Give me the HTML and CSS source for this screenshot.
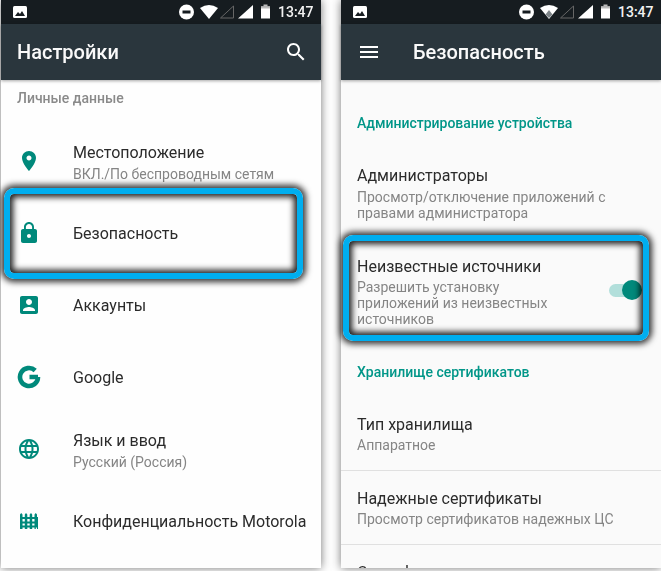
FILE: index.html
```html
<!DOCTYPE html>
<html lang="ru">
<head>
<meta charset="UTF-8">
<title>Настройки</title>
<link rel="stylesheet" href="styles.css">
</head>
<body>

<div class="screens">

  <div class="phone phone-white">
    <div class="status-bar">
      <svg class="pic-icon" width="14" height="12" viewBox="0 0 14 12"><rect width="14" height="12" rx="1.5" fill="#fff"/><path d="M2 10l3-4 2 2 2-3 3 5z" fill="#161c20"/></svg>
      <svg class="status-icons" width="94" height="24" viewBox="0 0 94 24">
        <circle cx="8.5" cy="12" r="7.5" fill="#fff"/><rect x="4.5" y="10.5" width="8" height="3" fill="#161c20"/>
        <path d="M22 8Q31 2 40 8L31 19z" fill="#fff"/>
        <path d="M42.5 18L55.5 6V18z" fill="none" stroke="#666" stroke-width="1"/>
        <path d="M60 18.500L75 5V18.500z" fill="#fff"/>
        <rect x="83" y="6.500" width="9" height="12" fill="#fff"/><rect x="85.500" y="4.500" width="4" height="2" fill="#bbb"/><rect x="83" y="6.500" width="9" height="2" fill="#bbb"/>
      </svg>
      <span class="time">13:47</span>
    </div>
    <div class="toolbar">
      <span class="toolbar-title">Настройки</span>
      <svg class="search-icon" width="24" height="24" viewBox="0 0 24 24"><path fill="#fff" d="M15.500 14h-.79l-.28-.27C15.410 12.590 16 11.110 16 9.500 16 5.910 13.090 3 9.500 3S3 5.910 3 9.500 5.910 16 9.500 16c1.610 0 3.090-.59 4.230-1.570l.27.28v.79l5 4.990L20.490 19l-4.990-5zm-6 0C7.010 14 5 11.990 5 9.500S7.010 5 9.500 5 14 7.010 14 9.500 11.990 14 9.500 14z"/></svg>
    </div>
    <div class="section-gray">Личные данные</div>

    <div class="menu-row">
      <svg class="row-icon" width="24" height="24" viewBox="0 0 24 24"><path d="M12 2C8.130 2 5 5.130 5 9c0 5.250 7 13 7 13s7-7.750 7-13c0-3.870-3.130-7-7-7zm0 9.500c-1.380 0-2.500-1.120-2.500-2.500s1.120-2.500 2.500-2.500 2.500 1.120 2.500 2.500-1.120 2.500-2.500 2.500z"/></svg>
      <div>
        <div class="title">Местоположение</div>
        <div class="sub">ВКЛ./По беспроводным сетям</div>
      </div>
    </div>
    <div class="menu-row">
      <svg class="row-icon" width="24" height="24" viewBox="0 0 24 24"><path d="M18 8h-1V6c0-2.760-2.240-5-5-5S7 3.240 7 6v2H6c-1.100 0-2 .9-2 2v10c0 1.100.9 2 2 2h12c1.100 0 2-.9 2-2V10c0-1.100-.9-2-2-2zm-6 9c-1.100 0-2-.9-2-2s.9-2 2-2 2 .9 2 2-.9 2-2 2zm3.100-9H8.900V6c0-1.710 1.390-3.100 3.100-3.100 1.710 0 3.100 1.390 3.100 3.100v2z"/></svg>
      <div class="title">Безопасность</div>
    </div>
    <div class="menu-row">
      <svg class="row-icon" width="24" height="24" viewBox="0 0 24 24"><path d="M3 5v14c0 1.100.89 2 2 2h14c1.100 0 2-.9 2-2V5c0-1.100-.9-2-2-2H5c-1.110 0-2 .9-2 2zm12 4c0 1.660-1.340 3-3 3s-3-1.340-3-3 1.340-3 3-3 3 1.340 3 3zm-9 8c0-2 4-3.100 6-3.100s6 1.100 6 3.100v1H6v-1z"/></svg>
      <div class="title">Аккаунты</div>
    </div>
    <div class="menu-row">
      <svg class="row-icon" width="24" height="24" viewBox="0 0 24 24"><path d="M21 12H12.500M21 12A9 9 0 1 1 18.200 5.500" fill="none" stroke="#00897b" stroke-width="4.600"/></svg>
      <div class="title">Google</div>
    </div>
    <div class="menu-row">
      <svg class="row-icon" width="24" height="24" viewBox="0 0 24 24"><path d="M11.990 2C6.470 2 2 6.480 2 12s4.470 10 9.990 10C17.520 22 22 17.520 22 12S17.520 2 11.990 2zm6.930 6h-2.950c-.32-1.250-.78-2.450-1.380-3.560 1.840.63 3.370 1.910 4.330 3.560zM12 4.040c.83 1.200 1.480 2.530 1.910 3.960h-3.820c.43-1.430 1.080-2.760 1.910-3.960zM4.260 14C4.100 13.360 4 12.690 4 12s.1-1.360.26-2h3.380c-.08.66-.14 1.320-.14 2 0 .68.06 1.340.14 2H4.260zm.82 2h2.950c.32 1.250.78 2.450 1.380 3.560-1.840-.63-3.370-1.900-4.330-3.560zm2.950-8H5.080c.96-1.660 2.490-2.930 4.330-3.560C8.810 5.550 8.350 6.750 8.030 8zM12 19.960c-.83-1.200-1.480-2.530-1.910-3.960h3.820c-.43 1.430-1.080 2.760-1.910 3.960zM14.340 14H9.660c-.09-.66-.16-1.320-.16-2 0-.68.07-1.350.16-2h4.680c.09.65.16 1.320.16 2 0 .68-.07 1.340-.16 2zm.25 5.560c.6-1.110 1.060-2.310 1.380-3.560h2.950c-.96 1.650-2.490 2.930-4.330 3.560zM16.360 14c.08-.66.14-1.320.14-2 0-.68-.06-1.340-.14-2h3.380c.16.64.26 1.310.26 2s-.1 1.360-.26 2h-3.380z"/></svg>
      <div>
        <div class="title">Язык и ввод</div>
        <div class="sub">Русский (Россия)</div>
      </div>
    </div>
    <div class="menu-row">
      <svg class="row-icon" width="24" height="24" viewBox="0 0 24 24"><path d="M3 8V5.500L4.200 4l1.300 1.500V8h2.300V5.500L9 4l1.300 1.500V8h2.400V5.500L14 4l1.200 1.500V8h2.300V5.500L18.800 4 20 5.500V8h1v12h-1v-1.500h-1.200V20h-1.300v-1.500h-2.300V20h-2.500v-1.500h-2.400V20H7.800v-1.500H5.500V20H3zm2.500 2v2.500h2.300V10zm4.800 0v2.500h2.400V10zm4.900 0v2.500h2.300V10zm-9.700 4.500v2h2.300v-2zm4.800 0v2h2.400v-2zm4.900 0v2h2.300v-2z" fill-rule="evenodd"/></svg>
      <div class="title">Конфиденциальность Motorola</div>
    </div>

    <div class="marker marker-left"></div>
  </div>

  <div class="phone">
    <div class="status-bar">
      <svg class="pic-icon" width="14" height="12" viewBox="0 0 14 12"><rect width="14" height="12" rx="1.500" fill="#fff"/><path d="M2 10l3-4 2 2 2-3 3 5z" fill="#161c20"/></svg>
      <svg class="status-icons" width="94" height="24" viewBox="0 0 94 24">
        <circle cx="8.500" cy="12" r="7.500" fill="#fff"/><rect x="4.500" y="10.500" width="8" height="3" fill="#161c20"/>
        <path d="M22 8Q31 2 40 8L31 19z" fill="#fff"/>
        <path d="M31 10l3.500 4.500-3.500 3.500-3.500-3.500z" fill="#7d8488"/>
        <path d="M42.500 18L55.500 6V18z" fill="none" stroke="#666" stroke-width="1"/>
        <path d="M60 18.500L75 5V18.500z" fill="#fff"/>
        <rect x="83" y="6.500" width="9" height="12" fill="#fff"/><rect x="85.500" y="4.500" width="4" height="2" fill="#bbb"/><rect x="83" y="6.500" width="9" height="2" fill="#bbb"/>
      </svg>
      <span class="time">13:47</span>
    </div>
    <div class="toolbar">
      <svg class="menu-icon" width="24" height="24" viewBox="0 0 24 24"><path fill="#fff" d="M3 18h18v-2H3v2zm0-5h18v-2H3v2zm0-7v2h18V6H3z"/></svg>
      <span class="toolbar-title">Безопасность</span>
    </div>
    <div class="settings-list">
      <div class="section-teal">Администрирование устройства</div>
      <div class="setting setting-admins">
        <div class="title">Администраторы</div>
        <div class="sub">Просмотр/отключение приложений с<br>правами администратора</div>
      </div>
      <div class="setting toggle-row">
        <div>
          <div class="title">Неизвестные источники</div>
          <div class="sub">Разрешить установку<br>приложений из неизвестных<br>источников</div>
        </div>
        <div class="switch"><span class="switch-thumb"></span></div>
      </div>
      <div class="section-teal">Хранилище сертификатов</div>
      <div class="setting divided">
        <div class="title">Тип хранилища</div>
        <div class="sub">Аппаратное</div>
      </div>
      <div class="setting divided">
        <div class="title">Надежные сертификаты</div>
        <div class="sub">Просмотр сертификатов надежных ЦС</div>
      </div>
      <div class="setting">
        <div class="title">Сертификаты пользователя</div>
      </div>
    </div>

    <div class="marker marker-right"></div>
  </div>

</div>

</body>
</html>
```

FILE: styles.css
```css
* {
  box-sizing: border-box;
}

html, body {
  margin: 0;
  height: 100%;
  overflow: hidden;
  background: #fff;
}

body {
  font-family: Roboto, sans-serif;
}

.screens {
  display: flex;
  gap: 20px;
  padding-left: 1px;
}

.phone {
  position: relative;
  width: 320px;
  height: 568px;
  flex: none;
  background: #fafafa;
  box-shadow: 0 0 9px rgba(0, 0, 0, 0.55);
  filter: blur(0.4px);
}

.phone-white {
  background: #fefefe;
}

/* status bar and toolbar */
.status-bar {
  height: 24px;
  display: flex;
  align-items: center;
  padding-left: 12px;
  background: #161c20;
}

.status-icons {
  margin-left: 151px;
}

.time {
  margin-left: 6px;
  color: #f2f2f2;
  font-size: 14px;
  font-weight: 500;
}

.toolbar {
  height: 56px;
  display: flex;
  align-items: center;
  padding-left: 16px;
  background: #2a363d;
  box-shadow: 0 1px 3px rgba(0, 0, 0, 0.35);
  position: relative;
}

.toolbar-title {
  color: #fafafa;
  font-size: 20px;
  font-weight: 500;
}

.menu-icon {
  margin-right: 32px;
}

.search-icon {
  margin-left: auto;
  margin-right: 13px;
}

/* left list */
.section-gray {
  height: 45px;
  padding: 9px 0 0 16px;
  line-height: 18px;
  color: #8a8a8a;
  font-size: 14px;
  font-weight: 500;
}

.menu-row {
  height: 72px;
  display: flex;
  align-items: center;
  gap: 32px;
  padding: 2px 0 0 16px;
}

.row-icon {
  flex: none;
  fill: #00897b;
  margin-top: -2px;
}

.title {
  color: #2b2b2b;
  font-size: 16px;
  line-height: 22px;
}

.sub {
  margin-top: 2px;
  color: #858585;
  font-size: 14px;
  line-height: 16px;
}

/* right list */
.settings-list {
  height: 488px;
  overflow: hidden;
  padding-top: 18px;
}

.section-teal {
  height: 50px;
  padding-left: 16px;
  line-height: 50px;
  color: #009688;
  font-size: 14px;
  font-weight: 500;
}

.setting {
  padding: 17px 16px;
}

.setting .sub {
  margin-top: 1px;
}

.setting-admins {
  padding-bottom: 18px;
}

.setting-admins .sub {
  margin-top: 2px;
}

.setting.divided {
  border-bottom: 1px solid #e0e0e0;
}

.toggle-row {
  display: flex;
  justify-content: space-between;
  align-items: center;
  padding-right: 20px;
  padding-bottom: 20px;
}

.switch {
  position: relative;
  width: 32px;
  height: 13px;
  border-radius: 7px;
  background: #b2dfdb;
  margin-top: -2px;
}

.switch-thumb {
  position: absolute;
  right: -1px;
  top: -4px;
  width: 20px;
  height: 20px;
  border-radius: 50%;
  background: #00897b;
}

/* blue hand-drawn frames over the screenshots */
.marker {
  position: absolute;
  border: 6px solid #00aeef;
  border-radius: 10px;
  box-shadow: 0 0 6px 3px rgba(0, 0, 0, 0.8), inset 0 0 6px 3px rgba(0, 0, 0, 0.9);
}

.marker-left {
  left: 3px;
  top: 188px;
  width: 299px;
  height: 91px;
}

.marker-right {
  left: 2px;
  top: 235px;
  width: 306px;
  height: 106px;
}
```
